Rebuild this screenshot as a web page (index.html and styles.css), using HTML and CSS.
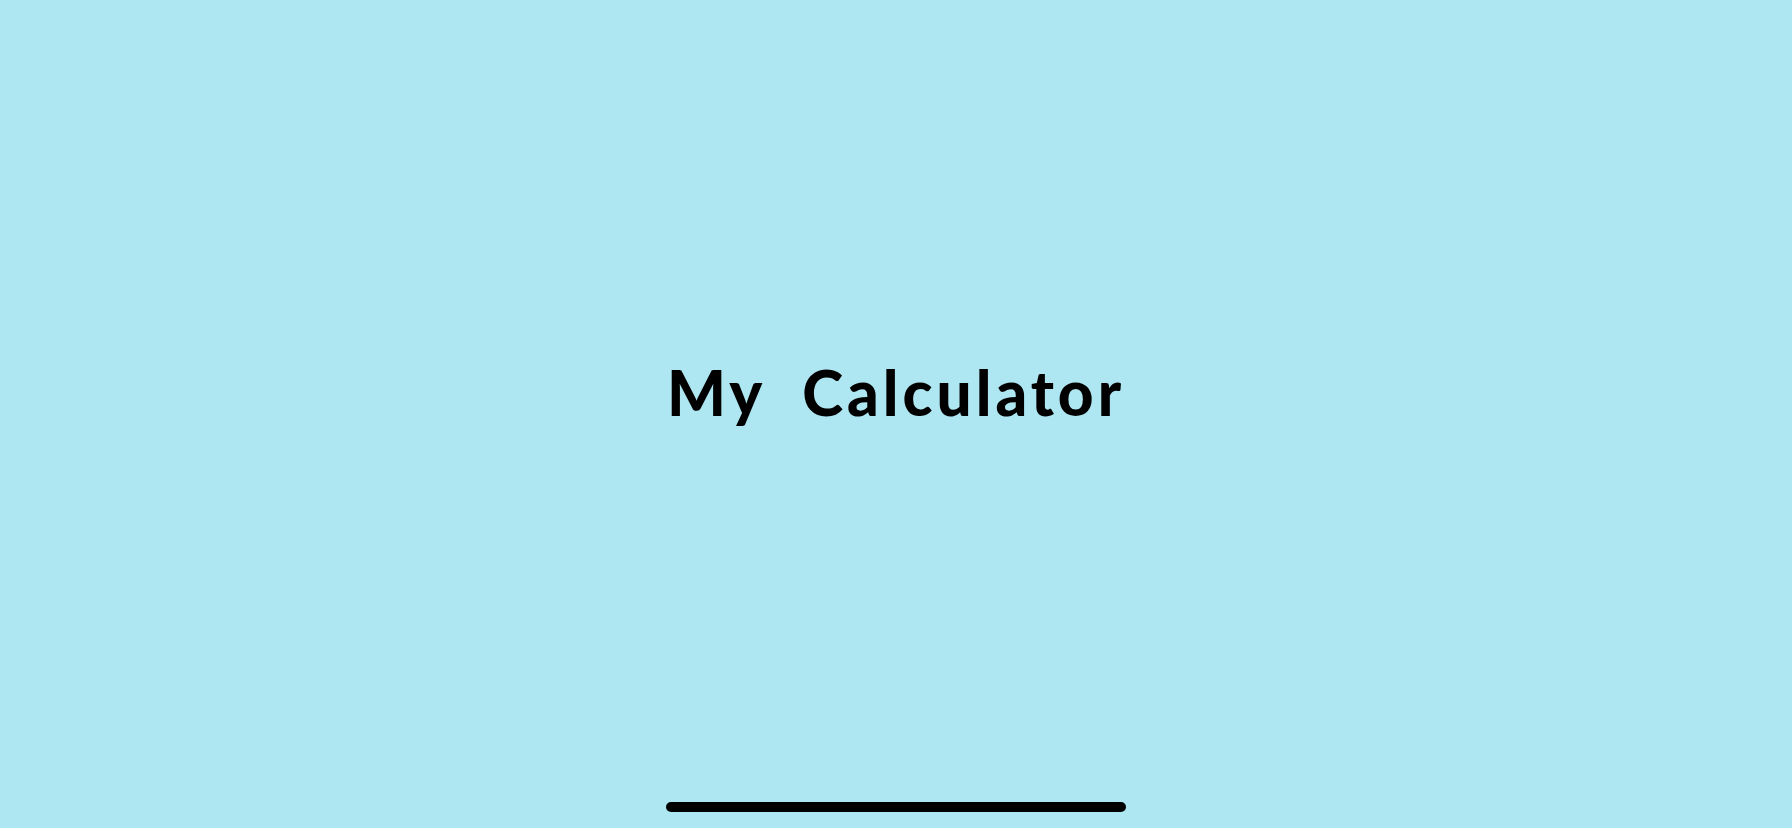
FILE: index.html
```html
<!DOCTYPE html>
<html lang="en">
<head>
<meta charset="utf-8">
<title>My Calculator</title>
<link rel="stylesheet" href="styles.css">
</head>
<body>
<main class="screen">
  <div class="splash">
    <h1 class="title">My&nbsp; Calculator</h1>
  </div>
  <div class="home-bar"><span class="home-indicator"></span></div>
</main>
</body>
</html>
```
FILE: styles.css
```css
html, body {
  margin: 0;
  padding: 0;
  height: 100%;
}
body {
  background: #aee6f2;
  font-family: "Lato", "Noto Sans", sans-serif;
  overflow: hidden;
}
.screen {
  height: 828px;
  display: flex;
  flex-direction: column;
}
.splash {
  flex: 1;
  display: flex;
  align-items: center;
  justify-content: center;
  padding-bottom: 18px;
}
.title {
  margin: 0;
  font-size: 62px;
  font-weight: 900;
  letter-spacing: 4px;
  color: #000;
  line-height: 1;
}
.home-bar {
  height: 26px;
  display: flex;
  justify-content: center;
  align-items: flex-start;
}
.home-indicator {
  width: 460px;
  height: 10px;
  border-radius: 5px;
  background: #000;
}
```
